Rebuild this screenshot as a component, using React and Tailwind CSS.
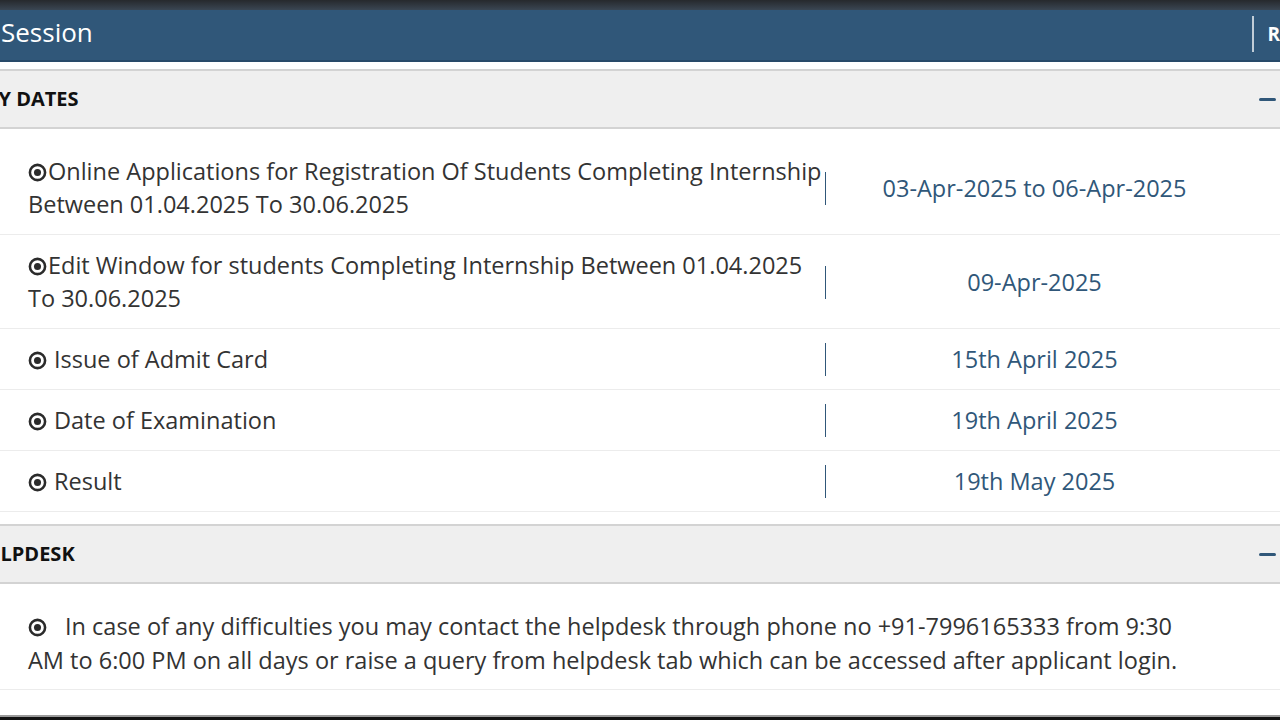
const DotCircle = ({ className = '' }) => (
  <svg viewBox="0 0 20 20" className={`inline-block h-[19px] w-[19px] shrink-0 ${className}`}>
    <circle cx="10" cy="10" r="8" fill="none" stroke="#2b2b2b" strokeWidth="2.7" />
    <circle cx="10" cy="10" r="3.7" fill="#2b2b2b" />
  </svg>
);

const SectionHeader = ({ title }) => (
  <div className="flex h-[60px] items-center justify-between border-y-2 border-[#d3d3d3] bg-[#efefef] pr-[4px]">
    <span className="ml-[-26px] text-[20px] font-bold text-[#111]">{title}</span>
    <span className="h-[3px] w-[17px] rounded-sm bg-[#305779]" />
  </div>
);

const dates = [
  {
    label: 'Online Applications for Registration Of Students Completing Internship Between 01.04.2025 To 30.06.2025',
    date: '03-Apr-2025 to 06-Apr-2025',
    tight: true,
  },
  {
    label: 'Edit Window for students Completing Internship Between 01.04.2025 To 30.06.2025',
    date: '09-Apr-2025',
    tight: true,
  },
  { label: 'Issue of Admit Card', date: '15th April 2025' },
  { label: 'Date of Examination', date: '19th April 2025' },
  { label: 'Result', date: '19th May 2025' },
];

const DateRow = ({ label, date, tight }) => (
  <div className="flex items-center border-b border-[#ececec] pb-[13px] pl-[28px] pt-[14px]">
    <div className="w-[797px] pr-[1px] text-[23.5px] leading-[33px] text-[#333]">
      <DotCircle className={tight ? 'mr-[1px] align-[-2px]' : 'mr-[7px] align-[-2px]'} />
      {label}
    </div>
    <div className="flex w-[418px] items-center">
      <div className="h-[33px] w-full border-l-[1.5px] border-[#305779] text-center text-[23.5px] leading-[33px] text-[#305779]">
        {date}
      </div>
    </div>
  </div>
);

export default function App() {
  return (
    <div
      className="relative h-[720px] w-[1280px] overflow-hidden bg-white"
      style={{ fontFamily: '"Open Sans", "Noto Sans", sans-serif' }}
    >
      <div className="h-[10px] bg-gradient-to-b from-[#26292d] to-[#3a4653]" />
      <div className="flex h-[52px] items-center justify-between border-b-2 border-[#284a69] bg-[#305779] pb-[6px] pl-[1px]">
        <span className="text-[26px] text-white">Session</span>
        <div className="flex items-center pt-[4px]">
          <span className="h-[36px] w-[2px] bg-white/70" />
          <span className="ml-[13px] text-[19px] font-bold text-white">R</span>
        </div>
      </div>

      <div className="mt-[7px]">
        <SectionHeader title="KEY DATES" />
        <div className="pt-[12px]">
          {dates.map((d) => (
            <DateRow key={d.date} {...d} />
          ))}
        </div>
      </div>

      <div className="mt-[12px]">
        <SectionHeader title="HELPDESK" />
        <div className="border-b border-[#ececec] pb-[12px] pt-[25px]">
          <p className="w-[1200px] pl-[28px] text-[23.5px] leading-[34px] text-[#333]">
            <DotCircle className="mr-[18px] align-[-2px]" />
            In case of any difficulties you may contact the helpdesk through phone no +91-7996165333 from 9:30 AM to 6:00 PM on all days or raise a query from helpdesk tab which can be accessed after applicant login.
          </p>
        </div>
      </div>

      <div className="absolute bottom-0 left-0 h-[5px] w-full border-t-2 border-[#9a9a9a] bg-[#111]" />
    </div>
  );
}
